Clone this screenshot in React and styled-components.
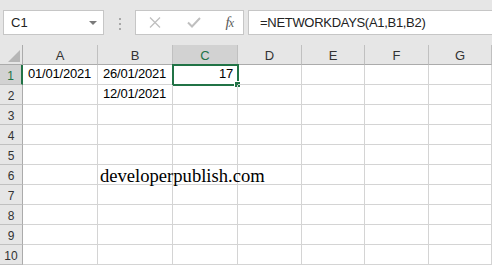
import React from 'react';
import styled, { createGlobalStyle } from 'styled-components';

const GlobalStyle = createGlobalStyle`
  html, body {
    margin: 0;
    padding: 0;
    background: #e6e6e6;
  }
  * {
    box-sizing: border-box;
  }
`;

const columns = ['A', 'B', 'C', 'D', 'E', 'F', 'G'];
const rowCount = 11;

// Cell values keyed by address
const cells = {
  A1: { value: '01/01/2021' },
  B1: { value: '26/01/2021' },
  C1: { value: '17', align: 'right' },
  B2: { value: '12/01/2021' },
};

const selected = { col: 'C', row: 1 };

const green = '#217346';

const Page = styled.div`
  position: relative;
  width: 100%;
  height: 265px;
  overflow: hidden;
  background: #e6e6e6;
  font-family: "Liberation Sans", Arial, sans-serif;
`;

const Toolbar = styled.div`
  display: flex;
  align-items: flex-start;
  height: 45px;
  padding: 10px 0 0 3px;
`;

const Box = styled.div`
  display: flex;
  align-items: center;
  height: 25px;
  background: #fff;
  border: 1px solid #c6c6c6;
`;

const NameBox = styled(Box)`
  width: 101px;
  padding: 0 6px 0 7px;
  font-size: 13px;
  color: #222;
`;

const Caret = styled.span`
  margin-left: auto;
  width: 0;
  height: 0;
  border-left: 4px solid transparent;
  border-right: 4px solid transparent;
  border-top: 4px solid #7a7a7a;
`;

const Grip = styled.div`
  display: flex;
  flex-direction: column;
  gap: 3px;
  width: 31px;
  align-items: center;
  padding-top: 8px;
`;

const Dot = styled.span`
  width: 2px;
  height: 2px;
  background: #a8a8a8;
`;

const ButtonGroup = styled(Box)`
  width: 109px;
  padding: 0 10px 0 12px;
  justify-content: space-between;
`;

const IconButton = styled.span`
  display: flex;
  align-items: center;
  justify-content: center;
  width: 14px;
  height: 14px;
`;

const Fx = styled.span`
  font-family: "Liberation Serif", "Times New Roman", serif;
  font-style: italic;
  font-size: 15px;
  color: #5a5a5a;
  letter-spacing: -1px;

  & small {
    font-size: 12px;
  }
`;

const FormulaInput = styled(Box)`
  flex: 1;
  margin-left: 4px;
  margin-right: -1px;
  padding-left: 11px;
  font-size: 13px;
  letter-spacing: -0.3px;
  color: #222;
`;

const Sheet = styled.div`
  display: grid;
  grid-template-columns: 23px 75px 75px 65px 64px 63px 64px 1fr;
  grid-auto-rows: 20px;
  background: #fff;
`;

const Corner = styled.div`
  position: relative;
  background: #e6e6e6;
  border-right: 1px solid #ababab;
  border-bottom: 1px solid #ababab;

  &::after {
    content: '';
    position: absolute;
    right: 2px;
    bottom: 2px;
    width: 0;
    height: 0;
    border-left: 12px solid transparent;
    border-bottom: 12px solid #b6b6b6;
  }
`;

const ColHeader = styled.div`
  display: flex;
  align-items: center;
  justify-content: center;
  padding-top: 1px;
  font-size: 13px;
  background: ${(p) => (p.active ? '#d2d2d2' : '#e6e6e6')};
  color: ${(p) => (p.active ? green : '#333')};
  border-right: 1px solid #c0c0c0;
  border-bottom: 1px solid #ababab;
`;

const RowHeader = styled.div`
  display: flex;
  align-items: center;
  justify-content: center;
  padding-top: 2px;
  font-size: 12px;
  background: ${(p) => (p.active ? '#d2d2d2' : '#e6e6e6')};
  color: ${(p) => (p.active ? green : '#333')};
  border-right: ${(p) => (p.active ? `2px solid ${green}` : '1px solid #ababab')};
  border-bottom: 1px solid #c0c0c0;
`;

const Cell = styled.div`
  position: relative;
  display: flex;
  align-items: flex-end;
  justify-content: ${(p) => (p.align === 'right' ? 'flex-end' : 'flex-start')};
  padding: 0 4px 3px 5px;
  font-size: 13px;
  letter-spacing: -0.2px;
  color: #000;
  border-right: 1px solid #d4d4d4;
  border-bottom: 1px solid #d4d4d4;
`;

const Selection = styled.div`
  position: absolute;
  top: -1px;
  left: -1px;
  width: 67px;
  height: 22px;
  border: 2px solid ${green};
  pointer-events: none;
`;

const Handle = styled.span`
  position: absolute;
  right: -4px;
  bottom: -4px;
  width: 7px;
  height: 7px;
  background: ${green};
  border: 1px solid #fff;
`;

const Watermark = styled.div`
  position: absolute;
  left: 100px;
  top: 167px;
  font-family: "Liberation Serif", "Times New Roman", serif;
  font-size: 18.6px;
  line-height: 1;
  color: #000;
`;

function CrossIcon() {
  return (
    <svg width="12" height="11" viewBox="0 0 12 11">
      <path d="M1 0.5 L11 10.5 M11 0.5 L1 10.5" stroke="#bfbfbf" strokeWidth="1.3" fill="none" />
    </svg>
  );
}

function CheckIcon() {
  return (
    <svg width="14" height="11" viewBox="0 0 14 11">
      <path d="M1 5.5 L5 9.5 L13 1" stroke="#bfbfbf" strokeWidth="2" fill="none" />
    </svg>
  );
}

function App() {
  const rows = Array.from({ length: rowCount }, (_, i) => i + 1);

  return (
    <Page>
      <GlobalStyle />
      <Toolbar>
        <NameBox>
          C1
          <Caret />
        </NameBox>
        <Grip>
          <Dot />
          <Dot />
          <Dot />
        </Grip>
        <ButtonGroup>
          <IconButton><CrossIcon /></IconButton>
          <IconButton><CheckIcon /></IconButton>
          <Fx>f<small>x</small></Fx>
        </ButtonGroup>
        <FormulaInput>=NETWORKDAYS(A1,B1,B2)</FormulaInput>
      </Toolbar>

      <Sheet>
        <Corner />
        {columns.map((c) => (
          <ColHeader key={c} active={c === selected.col}>{c}</ColHeader>
        ))}

        {rows.map((r) => (
          <React.Fragment key={r}>
            <RowHeader active={r === selected.row}>{r}</RowHeader>
            {columns.map((c) => {
              const cell = cells[c + r];
              const isSel = c === selected.col && r === selected.row;
              return (
                <Cell key={c} align={cell?.align}>
                  {cell?.value}
                  {isSel && (
                    <Selection>
                      <Handle />
                    </Selection>
                  )}
                </Cell>
              );
            })}
          </React.Fragment>
        ))}
      </Sheet>

      <Watermark>developerpublish.com</Watermark>
    </Page>
  );
}

export default App;
